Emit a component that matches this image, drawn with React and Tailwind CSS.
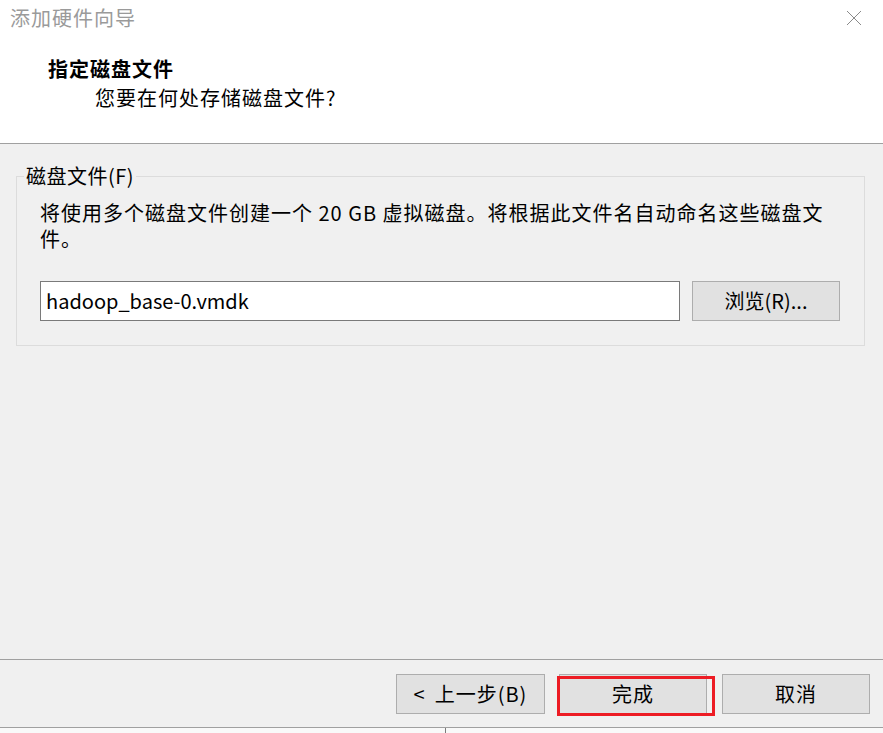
export default function App() {
  const cjk = { fontFamily: '"Noto Sans CJK SC", "Noto Sans", sans-serif' };

  return (
    <div
      className="w-[883px] h-[733px] bg-white flex flex-col overflow-hidden text-black select-none"
      style={cjk}
    >
      {/* ── Title bar + header ───────────────────────────────── */}
      <div className="h-[144px] shrink-0 bg-white border-b border-[#a0a0a0] flex flex-col">
        <div className="h-[36px] flex items-center justify-between pl-[10px] pr-[21px]">
          <span className="text-[20px] leading-[26px] tracking-[1px] text-[#9a9a9a]">添加硬件向导</span>
          <svg className="w-[16px] h-[16px]" viewBox="0 0 16 16" fill="none" stroke="#8a8a8a" strokeWidth="1">
            <path d="M1 1L15 15M15 1L1 15" />
          </svg>
        </div>
        <div className="pl-[48px] mt-[19px] text-[20px] leading-[28px] tracking-[1px] font-bold">指定磁盘文件</div>
        <div className="pl-[95px] mt-[1px] text-[20px] leading-[28px] tracking-[1px]">您要在何处存储磁盘文件?</div>
      </div>

      {/* ── Content ─────────────────────────────────────────── */}
      <div className="flex-1 min-h-0 bg-[#f0f0f0] pt-[19px] pl-[16px] pr-[18px]">
        <fieldset className="border border-[#dcdcdc]">
          <legend className="ml-[7px] px-[2px] text-[20px] leading-[26px] tracking-[0.5px]">磁盘文件(F)</legend>
          <div className="pl-[23px] pr-[24px] pb-[24px]">
            <div className="mt-[11px] text-[20px] leading-[26px] tracking-[1px]">
              <div>将使用多个磁盘文件创建一个 20 GB 虚拟磁盘。将根据此文件名自动命名这些磁盘文</div>
              <div>件。</div>
            </div>
            <div className="mt-[29px] flex items-center gap-[12px]">
              <div className="w-[640px] h-[40px] bg-white border border-[#7a7a7a] flex items-center pl-[5px] text-[20px]">
                hadoop_base-0.vmdk
              </div>
              <button className="w-[148px] h-[40px] bg-[#e1e1e1] border border-[#adadad] text-[20px] flex items-center justify-center">
                浏览(R)...
              </button>
            </div>
          </div>
        </fieldset>
      </div>

      {/* ── Footer buttons ──────────────────────────────────── */}
      <div className="h-[68px] shrink-0 bg-[#f0f0f0] border-t border-[#a0a0a0] flex justify-end items-start pt-[14px] pr-[13px] gap-[14px]">
        <button className="w-[149px] h-[40px] bg-[#e1e1e1] border border-[#adadad] text-[20px] flex items-center justify-center gap-[10px]">
          <span>&lt;</span>
          <span className="tracking-[1px]">上一步(B)</span>
        </button>
        <div className="relative">
          <button className="w-[148px] h-[40px] bg-[#e1e1e1] border border-[#adadad] text-[20px] tracking-[1px] flex items-center justify-center">
            完成
          </button>
          <div className="absolute left-[-2px] top-[2px] w-[158px] h-[40px] border-[3px] border-[#ed1c24] pointer-events-none" />
        </div>
        <button className="ml-[1px] w-[148px] h-[40px] bg-[#e1e1e1] border border-[#adadad] text-[20px] tracking-[1px] flex items-center justify-center">
          取消
        </button>
      </div>

      {/* ── Window underneath ───────────────────────────────── */}
      <div className="h-[6px] shrink-0 bg-[#f9f9f9] border-t border-[#a0a0a0] flex">
        <div className="w-[446px] border-r border-[#7a7a7a]" />
      </div>
    </div>
  );
}
